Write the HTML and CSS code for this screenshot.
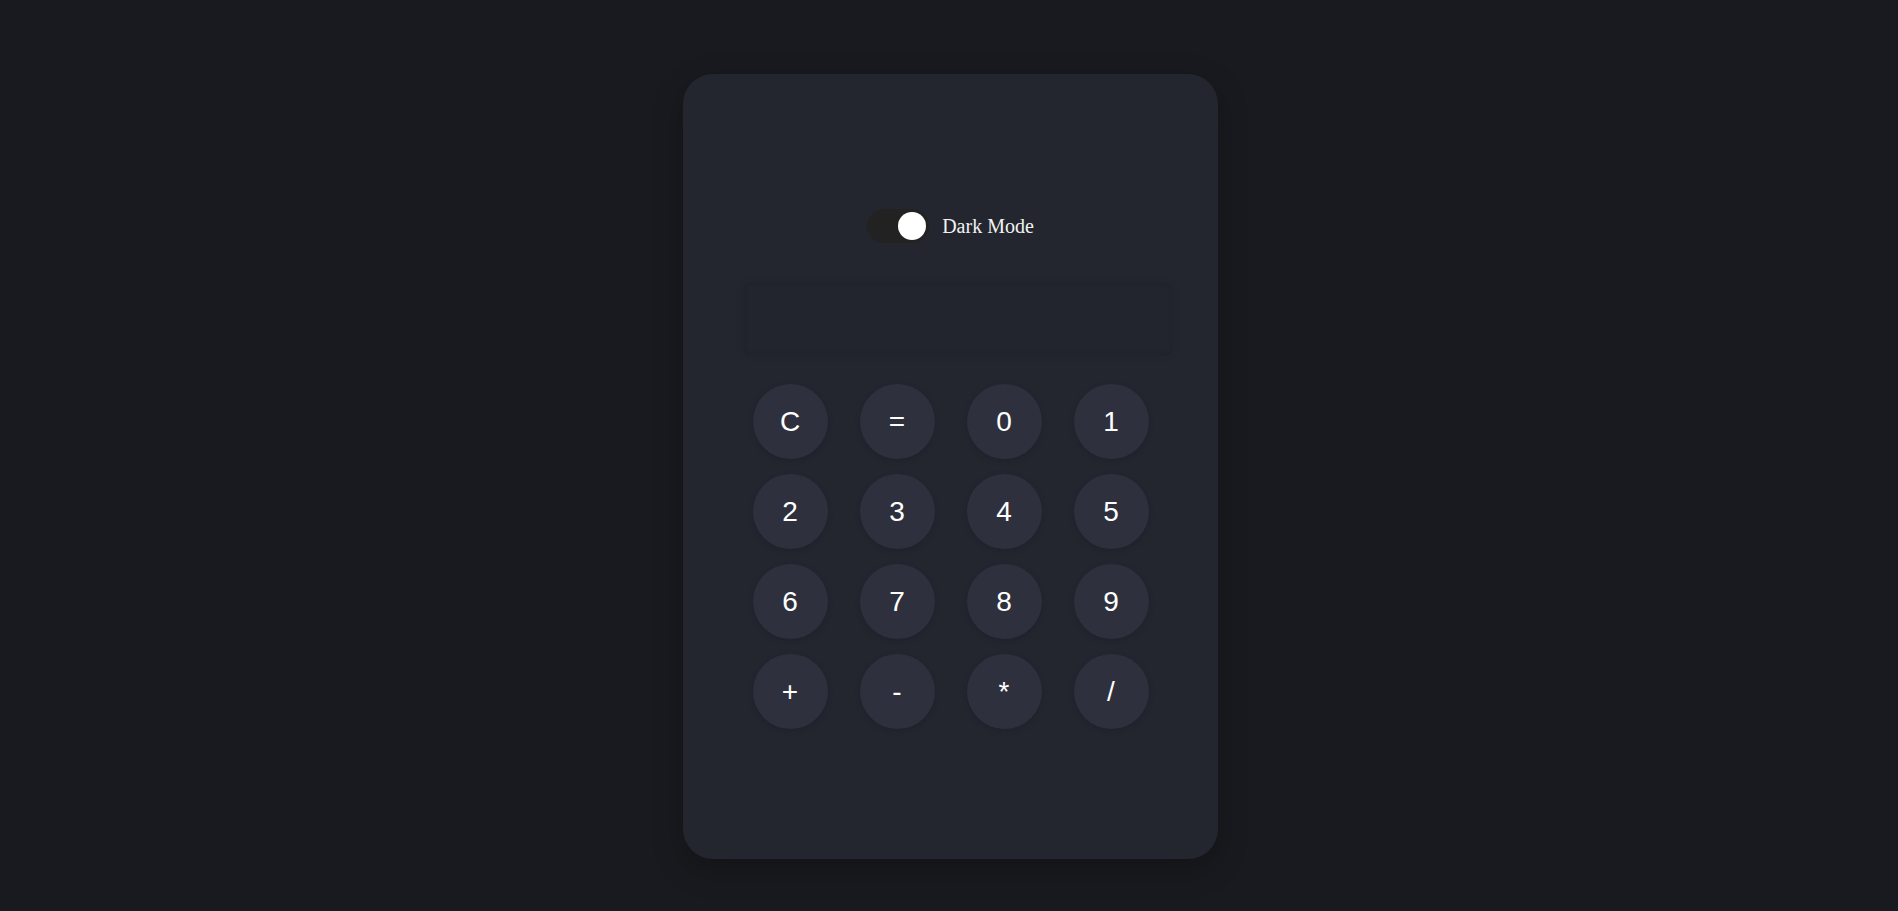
FILE: index.html
```html
<!DOCTYPE html>
<html lang="en">
<head>
<meta charset="utf-8">
<title>Calculator</title>
<link rel="stylesheet" href="styles.css">
</head>
<body>
<div class="calculator">
  <div class="mode-row">
    <label class="switch">
      <span class="knob"></span>
    </label>
    <span class="mode-label">Dark Mode</span>
  </div>
  <div class="display"></div>
  <div class="keys">
    <button class="key">C</button>
    <button class="key">=</button>
    <button class="key">0</button>
    <button class="key">1</button>
    <button class="key">2</button>
    <button class="key">3</button>
    <button class="key">4</button>
    <button class="key">5</button>
    <button class="key">6</button>
    <button class="key">7</button>
    <button class="key">8</button>
    <button class="key">9</button>
    <button class="key">+</button>
    <button class="key">-</button>
    <button class="key">*</button>
    <button class="key">/</button>
  </div>
</div>
</body>
</html>
```
FILE: styles.css
```css
html, body {
  margin: 0;
  padding: 0;
}
body {
  background: #191a1f;
  min-height: 100vh;
  display: flex;
  justify-content: center;
  align-items: flex-start;
  padding-top: 74px;
  padding-left: 3px;
  box-sizing: border-box;
  font-family: "Liberation Serif", serif;
}
.calculator {
  width: 535px;
  height: 785px;
  box-sizing: border-box;
  padding: 135px 61px 0 61px;
  background: #23262f;
  border-radius: 30px;
  box-shadow: 0 10px 30px rgba(0, 0, 0, 0.25);
  display: flex;
  flex-direction: column;
}
.mode-row {
  display: flex;
  justify-content: center;
  align-items: center;
  gap: 13px;
  height: 34px;
}
.switch {
  position: relative;
  width: 62px;
  height: 34px;
  border-radius: 34px;
  background: #222222;
  display: block;
}
.knob {
  position: absolute;
  left: 31px;
  top: 3px;
  width: 28px;
  height: 28px;
  border-radius: 50%;
  background: #ffffff;
}
.mode-label {
  color: #f2f2f2;
  font-size: 20px;
  line-height: 1;
}
.display {
  margin-top: 40px;
  width: 100%;
  height: 72px;
  padding: 0 7.5px;
  box-sizing: content-box;
  background: #22252e;
  border-radius: 6px;
  box-shadow: inset 0 0 5px rgba(0, 0, 0, 0.12), 0 0 8px rgba(0, 0, 0, 0.08);
}
.keys {
  margin-top: 29px;
  display: grid;
  grid-template-columns: repeat(4, 1fr);
  gap: 15px;
  justify-items: center;
}
.key {
  width: 75px;
  height: 75px;
  border: none;
  border-radius: 50%;
  background: #2e313d;
  color: #ffffff;
  font-family: "Liberation Sans", Arial, sans-serif;
  font-size: 28px;
  padding: 0;
  box-shadow: 0 2px 6px rgba(0, 0, 0, 0.12);
  cursor: pointer;
}
```
